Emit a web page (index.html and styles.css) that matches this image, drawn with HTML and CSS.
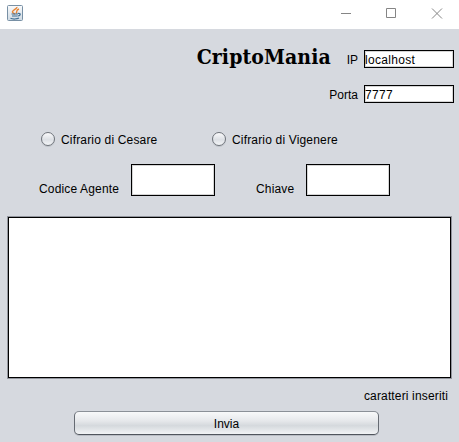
FILE: index.html
```html
<!DOCTYPE html>
<html lang="it">
<head>
<meta charset="utf-8">
<title>CriptoMania</title>
<link rel="stylesheet" href="styles.css">
</head>
<body>
<header class="titlebar">
  <svg class="java" width="16" height="16" viewBox="0 0 16 16" fill="none">
    <defs><linearGradient id="tile" x1="0" y1="0" x2="0" y2="1"><stop offset="0" stop-color="#fafbfc"/><stop offset="1" stop-color="#cfdae3"/></linearGradient></defs>
    <rect x=".5" y=".5" width="15" height="15" rx="1" fill="url(#tile)" stroke="#7890a5"/>
    <path d="M8.800 2C10 4-.1 6 7 9M11 4C7 5.500 10 6.500 8 8.500" stroke="#e78435" stroke-width="1.400" transform="translate(1 0)"/>
    <path d="M4.500 9h6.500M5 11h5.500M3.500 13.300c2 1 6.500 1 8.500-.2M11 8.500c3-.5 3 2-.2 2.500" stroke="#416f94" stroke-width="1.200"/>
  </svg>
  <svg class="controls" width="104" height="12" viewBox="0 0 104 12" fill="none" stroke="#858585">
    <path d="M1 5.500h10M46.500.5h9v9h-9zM92 .500l10 10M102 .500l-10 10"/>
  </svg>
</header>
<main class="panel">
  <div class="row head">
    <h1 class="title">CriptoMania</h1>
    <label class="ip" for="ip">IP</label>
    <input class="field line" id="ip" value="localhost">
  </div>
  <div class="row port">
    <label for="port">Porta</label>
    <input class="field line" id="port" value="7777">
  </div>
  <div class="row ciphers">
    <label class="option"><input class="radio" type="radio" name="cipher">Cifrario di Cesare</label>
    <label class="option"><input class="radio" type="radio" name="cipher">Cifrario di Vigenere</label>
  </div>
  <div class="row keys">
    <label class="agent" for="agent">Codice Agente</label>
    <input class="field box" id="agent">
    <label class="key" for="key">Chiave</label>
    <input class="field box" id="key">
  </div>
  <textarea class="message" aria-label="Messaggio"></textarea>
  <div class="count">caratteri inseriti</div>
  <button class="send">Invia</button>
</main>
</body>
</html>
```
FILE: styles.css
```css
* { box-sizing: border-box; }
body {
  margin: 0;
  height: 442px;
  overflow: hidden;
  background: #d6d9df;
  color: #000;
  font: 12px/16px "Liberation Sans", Arial, sans-serif;
}
input, button, textarea { font: inherit; color: inherit; margin: 0; }
.titlebar {
  height: 29px;
  display: flex;
  justify-content: space-between;
  padding: 5px 15px 0 7px;
  background: #fff;
}
.controls { margin-top: 3px; }
.panel { display: flex; flex-direction: column; }
.row { display: flex; }
.head { height: 56px; padding: 21px 5px 0 0; justify-content: flex-end; }
.title {
  width: 134px;
  margin: -8px 16px 0 0;
  font: bold 21px/30px "DejaVu Serif Condensed", "DejaVu Serif", serif;
  font-stretch: condensed;
  letter-spacing: .1px;
  white-space: nowrap;
}
.head label, .port label { margin: 2px 6px 0 0; }
.field {
  border: 1px solid #000;
  border-radius: 0;
  background: #fff;
  padding: 0;
  box-shadow: inset 0 0 0 1px #d5d5d5;
  outline: none;
}
.line { width: 90px; height: 18px; padding-top: 2px; letter-spacing: .3px; }
.port { height: 46px; justify-content: flex-end; padding-right: 5px; }
.ciphers { height: 33px; padding-left: 41px; }
.option { display: flex; gap: 6px; width: 171px; padding-top: 1px; letter-spacing: .17px; }
.radio {
  appearance: none;
  width: 14px;
  height: 14px;
  border: 1px solid #6e737a;
  border-radius: 50%;
  background: linear-gradient(#fafafb, #dde0e5 55%, #f3f5f7);
  box-shadow: 0 1px 0 #bfc3c9;
}
.keys { height: 52px; padding-left: 39px; }
.keys label { padding-top: 17px; letter-spacing: .15px; }
.agent { width: 92px; }
.key { width: 50px; margin-left: 41px; }
.box { width: 84px; height: 32px; }
.message {
  display: block;
  width: 445px;
  height: 163px;
  margin-left: 7px;
  border: 1px solid #92959d;
  border-radius: 0;
  background: #fff;
  box-shadow: inset 0 0 0 1px #000;
  outline: none;
  resize: none;
}
.count { height: 32px; padding-top: 9px; margin-right: 11px; text-align: right; letter-spacing: .15px; }
.send {
  width: 305px;
  height: 24px;
  margin-left: 74px;
  padding: 1px 0 0;
  border: 1px solid;
  border-color: #8b9097 #666b73 #50555d #666b73;
  border-radius: 5px;
  background: linear-gradient(#f8f9fa, #e6e8eb 40%, #d5d9dd 62%, #f1f3f5);
  box-shadow: 0 1px 0 #b9bdc4;
}
```
